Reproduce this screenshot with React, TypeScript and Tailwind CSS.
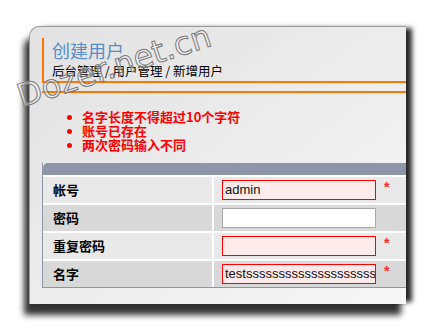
import React from 'react';

const ERRORS = ['名字长度不得超过10个字符', '账号已存在', '两次密码输入不同'];

const ROWS = [
  { label: '帐号', value: 'admin', error: true, bg: 'bg-[#e9e9e9]' },
  { label: '密码', value: '', error: false, bg: 'bg-[#d8d8d8]' },
  { label: '重复密码', value: '', error: true, bg: 'bg-[#e9e9e9]' },
  { label: '名字', value: 'testsssssssssssssssssssss', error: true, bg: 'bg-[#d8d8d8]' },
];

const cjk = "font-['Noto_Sans_CJK_SC',sans-serif]";

export default function App() {
  return (
    <div className="relative w-[427px] h-[329px] overflow-hidden bg-white pt-[26px] pl-[29px]">
      <div className="w-[377px] h-[278px] overflow-hidden rounded-tl-[10px] border-t border-l border-[#9a9a9a] bg-gradient-to-br from-[#e2e2e2] via-[#ececec] to-[#f7f7f7] pl-[12px] pt-[11px] shadow-[8px_0_5px_-2px_rgba(0,0,0,0.85),-5px_11px_6px_0_rgba(0,0,0,0.8)]">
        {/* header */}
        <div className="border-b-2 border-[#ff7700]">
          <div className={`border-l-2 border-[#ff7700] pl-[8px] pt-[1px] pb-[2px] ${cjk}`}>
            <div className="text-[18px] leading-[22px] text-[#5b8cc6]">创建用户</div>
            <div className="mt-[2px] text-[12.5px] leading-[16px] text-black">
              后台管理 / 用户管理 / 新增用户
            </div>
          </div>
        </div>
        <div className="mt-[8px] h-[2px] bg-[#ff7700]" />

        {/* errors */}
        <ul className={`mt-[17px] pl-[25px] ${cjk}`}>
          {ERRORS.map((e) => (
            <li key={e} className="flex items-center h-[14px] text-[13px] leading-[14px] font-bold text-[#ff0000]">
              <span className="w-[5px] h-[5px] rounded-full bg-[#ff0000] mr-[10px]" />
              {e}
            </li>
          ))}
        </ul>

        {/* form table */}
        <div className="mt-[11px] border-l border-b border-[#8e95a8]">
          <div className="h-[12px] rounded-tl-[5px] bg-[#8e95a8]" />
          {ROWS.map((r) => (
            <div key={r.label} className={`flex h-[28px] border-t-2 border-white ${r.bg}`}>
              <div className={`w-[169px] flex items-center pl-[10px] text-[13px] font-bold text-black ${cjk}`}>
                {r.label}
              </div>
              <div className="w-[2px] bg-white" />
              <div className="flex-1 flex items-center pl-[8px]">
                <div
                  className={`w-[154px] h-[20px] flex items-center overflow-hidden whitespace-nowrap pl-[2px] text-[13px] text-[#111] font-['Liberation_Sans',Arial,sans-serif] ${
                    r.error ? 'border border-[#ff0000] bg-[#fdeaea]' : 'border border-[#a8a8a8] bg-white'
                  }`}
                >
                  {r.value}
                </div>
                {r.error && (
                  <span className="ml-[8px] -mt-[6px] text-[14px] font-bold text-[#ff2a2a] font-['Liberation_Sans',sans-serif]">*</span>
                )}
              </div>
            </div>
          ))}
        </div>
      </div>

      {/* watermark */}
      <div className="absolute left-[4px] top-[48px] w-[220px] text-center origin-center -rotate-[18deg] text-[32px] leading-[36px] text-white/40 [-webkit-text-stroke:1px_#7a7a7a] font-['DejaVu_Sans',sans-serif]">
        Dozer.net.cn
      </div>
    </div>
  );
}
